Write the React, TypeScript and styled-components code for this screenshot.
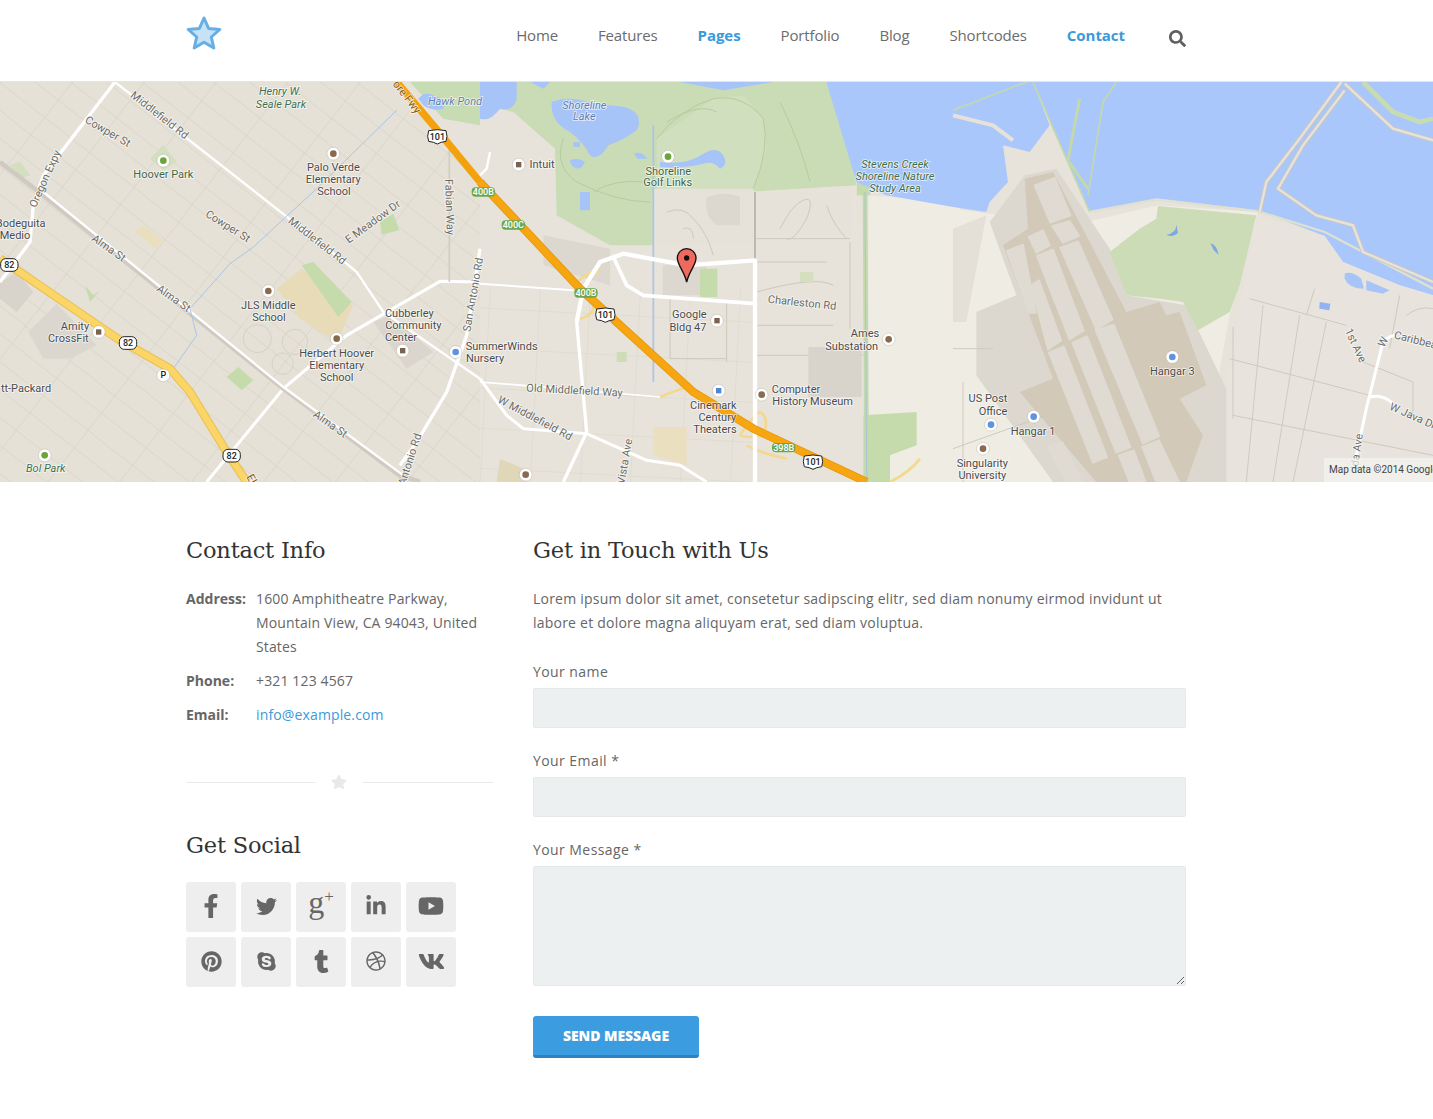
import React from 'react';
import styled, { createGlobalStyle } from 'styled-components';
import {
  FaDribbble,
  FaFacebookF,
  FaLinkedinIn,
  FaPinterest,
  FaSearch,
  FaSkype,
  FaStar,
  FaTumblr,
  FaTwitter,
  FaVk,
  FaYoutube,
} from 'react-icons/fa';

type LabelKind = 'place' | 'road' | 'park' | 'green' | 'water' | 'fwy';
type Label = { t: string; x: number; y: number; r?: number; k?: LabelKind };

const GlobalStyle = createGlobalStyle`
  html, body { margin: 0; padding: 0; background: #fff; }
  body {
    font-family: 'Open Sans', 'Liberation Sans', sans-serif;
    font-size: 14px;
    line-height: 24px;
    color: #666;
  }
`;

const Page = styled.div`
  width: 1433px;
  height: 1119px;
  overflow: hidden;
`;

const Header = styled.header`
  height: 81px;
  width: 1000px;
  margin-left: 186px;
  display: flex;
  justify-content: space-between;
  align-items: flex-start;
`;

const Logo = styled.svg`
  width: 36px;
  height: 35px;
  margin-top: 15px;
`;

const Nav = styled.nav`
  display: flex;
  align-items: center;
  gap: 40px;
  height: 71px;
`;

const NavLink = styled.a<{ $active?: boolean }>`
  font-size: 15px;
  letter-spacing: ${(p) => (p.$active ? '-0.05px' : '-0.15px')};
  font-weight: ${(p) => (p.$active ? 700 : 400)};
  color: ${(p) => (p.$active ? '#3b9ad9' : '#6c6c6c')};
  margin-top: -2px;
`;

const SearchButton = styled.span`
  display: flex;
  margin-left: 4px;
  margin-top: 6px;
  color: #5f5f5f;
  font-size: 17px;
`;

const MapFrame = styled.div`
  position: relative;
  height: 400px;
  border-top: 1px solid #e5e5e5;
  overflow: hidden;
  background: #e6e2da;
`;

const MapSvg = styled.svg`
  display: block;
  width: 1433px;
  height: 400px;
`;

const MapCredit = styled.div`
  position: absolute;
  right: 0;
  bottom: 0;
  width: 109px;
  height: 24px;
  padding-left: 5px;
  box-sizing: border-box;
  background: rgba(245, 243, 238, 0.7);
  font-family: Roboto, 'Liberation Sans', sans-serif;
  font-size: 10px;
  line-height: 24px;
  color: #444;
  white-space: nowrap;
  overflow: hidden;
`;

const labelColors: Record<LabelKind, string> = {
  place: '#4b4b4b',
  road: '#6b6b66',
  park: '#3f6f4c',
  green: '#3f6648',
  water: '#5d7fae',
  fwy: '#8a5a10',
};

const MapText = styled.text<{ $kind: LabelKind }>`
  font-family: Roboto, 'Liberation Sans', sans-serif;
  font-size: 33px;
  font-style: ${(p) => (p.$kind === 'water' || p.$kind === 'park' ? 'italic' : 'normal')};
  fill: ${(p) => labelColors[p.$kind]};
  stroke: rgba(255, 255, 255, 0.7);
  stroke-width: 5px;
  paint-order: stroke;
  text-anchor: middle;
`;

const ShieldText = styled.text<{ $light?: boolean }>`
  font-family: Roboto, 'Liberation Sans', sans-serif;
  font-size: 27px;
  font-weight: 500;
  fill: ${(p) => (p.$light ? '#fff' : '#222')};
  text-anchor: middle;
`;

const Content = styled.main`
  width: 1000px;
  margin-left: 186px;
  padding-top: 50px;
  display: grid;
  grid-template-columns: 307px 653px;
  column-gap: 40px;
`;

const Sidebar = styled.aside``;

const Heading = styled.h3`
  margin: 0 0 19px;
  font-family: 'DejaVu Serif', 'Liberation Serif', serif;
  font-weight: 400;
  font-size: 22.5px;
  line-height: 36px;
  letter-spacing: -0.2px;
  color: #333;
`;

const InfoList = styled.dl`
  margin: 0;
  display: grid;
  grid-template-columns: 70px 1fr;
  row-gap: 10px;
`;

const InfoKey = styled.dt`
  font-weight: 700;
  color: #666;
`;

const InfoValue = styled.dd`
  margin: 0;
  letter-spacing: 0.14px;
`;

const MailLink = styled.a`
  color: #3b9ad9;
`;

const Divider = styled.div`
  display: flex;
  align-items: center;
  gap: 16px;
  margin: 47px 0 37px;
  color: #e9e9e9;
  font-size: 16px;

  svg {
    margin-left: -1px;
  }

  &::before,
  &::after {
    content: '';
    flex: 1;
    height: 1px;
    background: #eaeaea;
  }
`;

const SocialGrid = styled.div`
  display: grid;
  grid-template-columns: repeat(5, 50px);
  gap: 5px;
`;

const SocialTile = styled.a<{ $size?: number }>`
  height: 50px;
  padding-bottom: 2px;
  box-sizing: border-box;
  display: flex;
  align-items: center;
  justify-content: center;
  background: #eee;
  border-radius: 3px;
  color: #666;
  font-size: ${(p) => p.$size ?? 21}px;
`;

const GooglePlus = styled.span`
  font-family: 'Liberation Serif', serif;
  font-size: 32px;
  line-height: 1;
  margin-top: -8px;

  sup {
    font-size: 17px;
    line-height: 0;
    vertical-align: 11px;
  }
`;

const FormColumn = styled.section``;

const Intro = styled.p`
  margin: 0 0 25px;
  letter-spacing: 0.22px;
`;

const Form = styled.form`
  display: flex;
  flex-direction: column;
  align-items: flex-start;
`;

const FieldLabel = styled.label`
  display: block;
  width: 100%;
  margin-bottom: 21px;
  letter-spacing: 0.43px;
`;

const fieldStyles = `
  display: block;
  width: 100%;
  box-sizing: border-box;
  margin-top: 4px;
  background: #ecf0f1;
  border: 1px solid #e5e9ea;
  border-radius: 2px;
  outline: none;
`;

const TextInput = styled.input`
  ${fieldStyles}
  height: 40px;
`;

const MessageInput = styled.textarea`
  ${fieldStyles}
  height: 120px;
  resize: vertical;
`;

const SendButton = styled.button`
  width: 166px;
  height: 42px;
  margin-top: 9px;
  padding: 0;
  border: 0;
  border-bottom: 3px solid #2f82c0;
  border-radius: 3px;
  background: #3b9ce0;
  font-family: 'Open Sans', sans-serif;
  font-size: 14px;
  font-weight: 800;
  letter-spacing: -0.08px;
  color: #fff;
  text-transform: uppercase;
`;

const leftLabels: Label[] = [
  { t: 'Henry W.', x: 840, y: 40, k: 'park' },
  { t: 'Seale Park', x: 843, y: 78, k: 'park' },
  { t: 'Middlefield Rd', x: 472, y: 108, r: 38, k: 'road' },
  { t: 'Middlefield Rd', x: 945, y: 485, r: 38, k: 'road' },
  { t: 'Cowper St', x: 318, y: 158, r: 30, k: 'road' },
  { t: 'Cowper St', x: 678, y: 442, r: 32, k: 'road' },
  { t: 'Hoover Park', x: 490, y: 289, k: 'green' },
  { t: 'Palo Verde', x: 1000, y: 268 },
  { t: 'Elementary', x: 1000, y: 304 },
  { t: 'School', x: 1002, y: 340 },
  { t: 'E Meadow Dr', x: 1125, y: 428, r: -36, k: 'road' },
  { t: 'Fabian Way', x: 1338, y: 375, r: 88, k: 'road' },
  { t: 'San Antonio Rd', x: 1430, y: 640, r: -80, k: 'road' },
  { t: 'Oregon Expy', x: 145, y: 295, r: -66, k: 'road' },
  { t: 'Bodeguita', x: 62, y: 436 },
  { t: 'Medio', x: 45, y: 472 },
  { t: 'Alma St', x: 320, y: 507, r: 35, k: 'road' },
  { t: 'Alma St', x: 515, y: 658, r: 35, k: 'road' },
  { t: 'Alma St', x: 985, y: 1035, r: 35, k: 'road' },
  { t: 'JLS Middle', x: 805, y: 680 },
  { t: 'School', x: 807, y: 716 },
  { t: 'Cubberley', x: 1228, y: 704 },
  { t: 'Community', x: 1240, y: 740 },
  { t: 'Center', x: 1203, y: 776 },
  { t: 'SummerWinds', x: 1505, y: 803 },
  { t: 'Nursery', x: 1455, y: 839 },
  { t: 'Amity', x: 225, y: 743 },
  { t: 'CrossFit', x: 205, y: 779 },
  { t: 'Herbert Hoover', x: 1010, y: 824 },
  { t: 'Elementary', x: 1010, y: 860 },
  { t: 'School', x: 1010, y: 896 },
  { t: 'tt-Packard', x: 78, y: 929 },
  { t: 'Bol Park', x: 137, y: 1171, k: 'park' },
  { t: 'Antonio Rd', x: 1240, y: 1135, r: -72, k: 'road' },
  { t: 'ore Fwy', x: 1212, y: 52, r: 52, k: 'fwy' },
  { t: 'Hawk Pond', x: 1365, y: 70, k: 'water' },
  { t: 'El', x: 745, y: 1196, r: 62, k: 'fwy' },
];

const midLabels: Label[] = [
  { t: 'Shoreline', x: 313, y: 82, k: 'water' },
  { t: 'Lake', x: 313, y: 115, k: 'water' },
  { t: 'Intuit', x: 186, y: 259 },
  { t: 'Shoreline', x: 565, y: 278, k: 'green' },
  { t: 'Golf Links', x: 563, y: 313, k: 'green' },
  { t: 'Stevens Creek', x: 1245, y: 257, k: 'park' },
  { t: 'Shoreline Nature', x: 1245, y: 293, k: 'park' },
  { t: 'Study Area', x: 1245, y: 329, k: 'park' },
  { t: 'Charleston Rd', x: 965, y: 673, r: 6, k: 'road' },
  { t: 'Google', x: 628, y: 707 },
  { t: 'Bldg 47', x: 624, y: 746 },
  { t: 'Ames', x: 1155, y: 764 },
  { t: 'Substation', x: 1115, y: 803 },
  { t: 'Computer', x: 948, y: 932 },
  { t: 'History Museum', x: 998, y: 968 },
  { t: 'Old Middlefield Way', x: 283, y: 936, r: 3, k: 'road' },
  { t: 'W Middlefield Rd', x: 160, y: 1018, r: 28, k: 'road' },
  { t: 'Vista Ave', x: 445, y: 1140, r: -80, k: 'road' },
  { t: 'Cinemark', x: 700, y: 980 },
  { t: 'Century', x: 712, y: 1016 },
  { t: 'Theaters', x: 705, y: 1052 },
];

const rightLabels: Label[] = [
  { t: 'Hangar 3', x: 658, y: 878 },
  { t: 'US Post', x: 105, y: 959 },
  { t: 'Office', x: 120, y: 998 },
  { t: 'Hangar 1', x: 240, y: 1059 },
  { t: 'Singularity', x: 88, y: 1155 },
  { t: 'University', x: 88, y: 1190 },
  { t: '1st Ave', x: 1198, y: 795, r: 65, k: 'road' },
  { t: 'W', x: 1300, y: 785, r: -62, k: 'road' },
  { t: 'Caribbea', x: 1385, y: 785, r: 14, k: 'road' },
  { t: 'W Java Dr', x: 1375, y: 1012, r: 24, k: 'road' },
  { t: 'Ida Ave', x: 1222, y: 1110, r: -82, k: 'road' },
];

const runways = [
  '245,310 305,288 352,400 292,422',
  '298,432 350,418 378,462 330,482',
  '228,465 270,445 290,490 250,512',
  '322,497 375,478 478,712 430,742',
  '252,522 300,503 392,745 350,772',
  '162,507 210,488 248,692 228,692',
  '235,610 258,595 324,775 285,802',
  '428,745 482,728 618,1062 570,1084',
  '358,782 402,763 532,1095 490,1112',
  '288,812 332,793 462,1125 420,1142',
  '568,1095 618,1075 678,1200 610,1200',
  '283,1095 327,1080 388,1200 340,1200',
  '498,1120 542,1105 578,1200 530,1200',
];

const Labels: React.FC<{ items: Label[]; dx: number }> = ({ items, dx }) => (
  <g transform={`translate(${dx} 0)`}>
    {items.map((l, i) => (
      <MapText
        key={`${l.t}-${i}`}
        $kind={l.k ?? 'place'}
        x={l.x}
        y={l.y}
        transform={l.r ? `rotate(${l.r} ${l.x} ${l.y})` : undefined}
      >
        {l.t}
      </MapText>
    ))}
  </g>
);

const Shield: React.FC<{ x: number; y: number; t: string }> = ({ x, y, t }) => (
  <g transform={`translate(${x} ${y})`}>
    <path
      d="M-26 -18 Q0 -24 26 -18 Q32 0 26 14 Q10 16 0 22 Q-10 16 -26 14 Q-32 0 -26 -18Z"
      fill="#fff"
      stroke="#222"
      strokeWidth="3"
    />
    <ShieldText y={9}>{t}</ShieldText>
  </g>
);

const RoundShield: React.FC<{ x: number; y: number; t: string }> = ({ x, y, t }) => (
  <g transform={`translate(${x} ${y})`}>
    <rect x={-26} y={-19} width={52} height={38} rx={15} fill="#fff" stroke="#222" strokeWidth="3" />
    <ShieldText y={9}>{t}</ShieldText>
  </g>
);

const ExitTag: React.FC<{ x: number; y: number; t: string }> = ({ x, y, t }) => (
  <g transform={`translate(${x} ${y})`}>
    <rect x={-35} y={-14} width={70} height={28} rx={12} fill="#6aa84f" />
    <ShieldText $light y={9}>
      {t}
    </ShieldText>
  </g>
);

const Poi: React.FC<{ x: number; y: number; c: string; square?: boolean; t?: string }> = ({ x, y, c, square, t }) => (
  <g transform={`translate(${x} ${y})`}>
    <circle r={19} fill="#fff" stroke="rgba(120,115,100,0.35)" strokeWidth="2" />
    {t ? (
      <ShieldText y={9} fill={c}>
        {t}
      </ShieldText>
    ) : square ? (
      <rect x={-8} y={-8} width={16} height={16} fill={c} />
    ) : (
      <circle r={10} fill={c} />
    )}
  </g>
);

const MapDrawing: React.FC = () => (
  <MapSvg viewBox="0 0 4299 1200">
    <defs>
      <pattern id="streets" patternUnits="userSpaceOnUse" width="170" height="66" patternTransform="rotate(38)">
        <path d="M0 0H170M0 0V66" stroke="#d5d0c4" strokeWidth="3" fill="none" />
      </pattern>
      <pattern id="blocks" patternUnits="userSpaceOnUse" width="150" height="120" patternTransform="rotate(3)">
        <path d="M0 0H150M0 0V120" stroke="#d9d5ca" strokeWidth="3" fill="none" />
      </pattern>
      <radialGradient id="bay" gradientUnits="userSpaceOnUse" cx="3550" cy="100" r="1100">
        <stop offset="0.55" stopColor="#b0ccfd" />
        <stop offset="1" stopColor="#a9c7fb" />
      </radialGradient>
    </defs>

    <rect width="4299" height="1200" fill="#e7e3da" />
    <polygon points="0,0 1190,0 1440,300 1440,1200 0,1200" fill="#e5e1d7" />
    <polygon points="0,0 1190,0 1440,300 1440,1200 0,1200" fill="url(#streets)" />
    <rect x="1440" y="620" width="830" height="580" fill="url(#blocks)" />

    {/* left panel */}
    <g>
      <polygon points="405,450 430,428 490,475 465,500" fill="#e9dfbf" />
      <polygon points="830,620 905,560 1000,640 1060,670 1010,780 900,710" fill="#e8dcb8" />
      <polygon points="905,550 940,540 1055,660 1015,705" fill="#c6dbac" />
      <polygon points="1140,420 1180,395 1198,445 1145,458" fill="#c6dbac" />
      <polygon points="680,885 715,855 760,895 725,925" fill="#c6dbac" />
      <polygon points="255,610 280,640 300,625 270,660" fill="#c6dbac" />
      <polygon points="450,230 490,188 530,240 490,265" fill="#d3dfbe" />
      <polygon points="30,250 60,238 90,280 60,290" fill="#d3dfbe" />
      <polygon points="85,750 170,665 290,790 210,830 130,830" fill="#dcd7ce" />
      <polygon points="1120,720 1170,700 1300,810 1220,860" fill="#dad6cd" />
      <polygon points="0,600 50,570 100,630 50,690 0,650" fill="#d8d4cb" />
      <circle cx="772" cy="770" r="42" fill="none" stroke="#d6d1c6" strokeWidth="3" />
      <circle cx="885" cy="780" r="38" fill="none" stroke="#d6d1c6" strokeWidth="3" />
      <circle cx="848" cy="845" r="32" fill="none" stroke="#d6d1c6" strokeWidth="3" />

      <polyline points="345,0 130,280 100,370 90,480 0,600" fill="none" stroke="#fff" strokeWidth="10" />
      <polyline points="345,0 1040,545 1070,570 1150,690 1440,890" fill="none" stroke="#fff" strokeWidth="7" />
      <polyline points="1440,500 1400,760 1340,930 1250,1080 1200,1150" fill="none" stroke="#fff" strokeWidth="10" />
      <polyline points="620,1200 850,920 1040,760 1320,598 1440,600" fill="none" stroke="#fff" strokeWidth="9" />
      <polyline points="0,240 130,340 850,920 1200,1180 1260,1200" fill="none" stroke="#cfcbc2" strokeWidth="14" />
      <polyline points="130,330 850,915 1210,1180" fill="none" stroke="#fff" strokeWidth="7" />
      <polyline points="1348,200 1348,600" fill="none" stroke="#d2cdc1" strokeWidth="5" />
      <polyline
        points="1190,85 950,320 760,495 690,545 570,680 590,760 520,860"
        fill="none"
        stroke="#a9c4ec"
        strokeWidth="3"
      />

      <polyline
        points="0,530 30,550 360,775 510,860 570,930 680,1110 740,1200"
        fill="none"
        stroke="#e9bf55"
        strokeWidth="26"
      />
      <polyline
        points="0,530 30,550 360,775 510,860 570,930 680,1110 740,1200"
        fill="none"
        stroke="#fbd565"
        strokeWidth="20"
      />
      <path d="M1230 0h210v130l-110 -20z" fill="#c8dcb3" />
      <path d="M1255 50q20 -25 45 -10q40 10 30 40q-30 10 -60 -10z" fill="#a6c4f7" />
      <polyline points="1190,0 1300,130 1440,300" fill="none" stroke="#f4a10e" strokeWidth="22" />

      <Poi x={490} y={236} c="#6aa53a" />
      <Poi x={1000} y={215} c="#8a6a4f" />
      <Poi x={805} y={627} c="#8a6a4f" />
      <Poi x={1010} y={770} c="#8a6a4f" />
      <Poi x={1208} y={806} c="#7a6250" square />
      <Poi x={296} y={750} c="#7a6250" square />
      <Poi x={134} y={1120} c="#6aa53a" />
      <Poi x={1367} y={810} c="#5f93dd" />
      <Poi x={490} y={880} c="#8a6a4f" t="P" />
      <RoundShield x={28} y={549} t="82" />
      <RoundShield x={384} y={783} t="82" />
      <RoundShield x={695} y={1121} t="82" />
      <Shield x={1312} y={164} t="101" />
    </g>

    {/* middle panel */}
    <g transform="translate(1440 0)">
      <polygon
        points="60,0 1060,0 1130,310 830,328 520,320 520,490 390,490 230,400 225,200 100,90 60,80"
        fill="#c9dcb5"
      />
      <polygon points="530,170 700,50 790,40 850,110 860,200 820,320 530,320" fill="#d2e0c0" opacity="0.8" />
      <path
        d="M530 170Q600 80 700 50Q790 35 850 110Q870 200 820 320M250 170q-30 80 40 130q120 60 220 60M900 60q60 120 90 240M340 330q60 -40 160 -30M560 120q100 -60 150 -30"
        fill="none"
        stroke="#b6cc9f"
        strokeWidth="3"
      />
      <path d="M0 0h110v50q-10 40 -50 30q-30 40 -60 30z" fill="#a6c4f7" />
      <path d="M150 0h60l-20 20zM600 0h280l-150 25z" fill="#a6c4f7" />
      <path
        d="M215 60q50 -20 110 0q60 10 110 15q60 20 35 70q-40 30 -85 45q-30 50 -55 30q-20 -40 -60 -70q-60 -30 -55 -90z"
        fill="#a6c4f7"
      />
      <path d="M270 235q25 -10 45 5q-10 20 -20 20q-25 -5 -25 -25zM300 330h30v55h-30z" fill="#a6c4f7" />
      <path d="M462 215q20 -10 40 15h-30zM280 180h20v15h-20z" fill="#a6c4f7" />
      <path d="M540 240q80 10 130 -25q40 -25 60 5q15 30 -10 40q-20 -25 -50 -15q-60 15 -130 10z" fill="#a6c4f7" />
      <polyline points="520,130 520,900" fill="none" stroke="#a9c4ec" strokeWidth="5" />
      <path d="M530 320h290v160q-140 10 -290 10zM830 330h285v130h-285z" fill="#e6e2da" />
      <path
        d="M680 345q60 -20 100 0v85h-70q-40 -30 -30 -85zM190 460l200 40v110l-200 -60zM548 550h130v90h-130z"
        fill="#dcd8cf"
      />
      <path d="M660 560h52v85h-52z" fill="#c6dbac" />
      <path
        d="M560 390q50 -20 80 20q40 40 60 110M610 440q30 -10 30 30M900 440q30 -60 60 -80q50 -30 20 50q-40 70 -60 60M1040 370q20 60 60 100M830 470H1110M830 540H1040"
        fill="none"
        stroke="#cdc8bc"
        strokeWidth="3"
      />
      <path
        d="M570 650v180h170M740 660v180M830 820H1150M1110 480V740M1060 610q-50 -30 -230 20M830 730h230"
        fill="none"
        stroke="#cdc8bc"
        strokeWidth="3"
      />
      <rect x="985" y="795" width="160" height="150" fill="#d8d4cb" />
      <polygon points="1165,340 1440,360 1440,1200 1165,1200" fill="#efece4" />
      <polygon points="1150,1000 1310,990 1310,1090 1230,1120 1230,1200 1150,1200" fill="#c6dbac" />
      <polygon points="1140,0 1200,0 1170,340 1130,340" fill="#c6dbac" />
      <rect x="410" y="810" width="30" height="30" fill="#cfdcb8" />
      <rect x="960" y="570" width="40" height="30" fill="#d3dfbe" />
      <polygon points="520,1035 620,1035 620,1150 520,1120" fill="#eadfbe" />
      <polygon points="60,1130 130,1160 140,1200 50,1200" fill="#dfd7b8" />
      <polyline points="825,330 825,535" fill="none" stroke="#bdb9ae" strokeWidth="6" />
      <polyline points="1155,330 1160,1200" fill="none" stroke="#c3d9ab" strokeWidth="14" />
      <polyline points="1155,330 1160,1200" fill="none" stroke="#9fbdeb" strokeWidth="2" />
      <path
        d="M290 600q50 -40 70 -30M300 710q50 -10 40 -60M540 945q70 -30 100 -30M780 1060q40 -60 60 -70q30 20 10 70q-50 10 -70 0M800 1090q60 30 120 40M1230 1200q60 -30 90 -70"
        fill="none"
        stroke="#f2d98c"
        strokeWidth="8"
      />
      <g fill="none" stroke="#fff" strokeLinejoin="round">
        <polyline points="290,720 310,620 360,540 430,515 620,550 825,535 825,1200" strokeWidth="13" />
        <polyline points="400,525 440,610 490,640 825,665" strokeWidth="11" />
        <polyline points="0,605 280,625" strokeWidth="6" />
        <polyline points="290,720 320,1050 250,1200" strokeWidth="10" />
        <polyline points="0,900 130,910 540,945" strokeWidth="5" />
        <polyline points="0,890 80,1000 130,1040 320,1055 500,1135 600,1150 680,1200" strokeWidth="9" />
        <polyline points="30,210 20,260 0,280" strokeWidth="7" />
      </g>
      <polyline points="0,300 300,620 640,930 820,1040 1160,1200" fill="none" stroke="#e2980c" strokeWidth="25" />
      <polyline points="0,300 300,620 640,930 820,1040 1160,1200" fill="none" stroke="#f7a612" strokeWidth="20" />

      <path
        d="M620 600C612 565 592 550 592 528a28 28 0 1 1 56 0C648 550 628 565 620 600Z"
        fill="#f0695e"
        stroke="#111"
        strokeWidth="4"
      />
      <circle cx="620" cy="528" r="8" fill="#111" />

      <ExitTag x={10} y={330} t="400B" />
      <ExitTag x={100} y={429} t="400C" />
      <ExitTag x={318} y={633} t="400B" />
      <ExitTag x={911} y={1097} t="398B" />
      <Shield x={376} y={699} t="101" />
      <Shield x={999} y={1140} t="101" />
      <Poi x={116} y={248} c="#7a6250" square />
      <Poi x={564} y={224} c="#6aa53a" />
      <Poi x={711} y={716} c="#7a6250" square />
      <Poi x={1244} y={204} c="#6aa53a" />
      <Poi x={1226} y={772} c="#8a6a4f" />
      <Poi x={845} y={938} c="#8a6a4f" />
      <Poi x={716} y={926} c="#4f84d8" square />
      <Poi x={137} y={1178} c="#8a6a4f" />
    </g>

    {/* right panel */}
    <g transform="translate(2859 0)">
      <path
        d="M-127 0H240L290 130L230 210L150 190L165 300L110 360L100 390L0 375L-200 340L-290 300L-380 0Z"
        fill="url(#bay)"
      />
      <path d="M240 0H1440V640L1340 610L1170 540L1115 462L915 385L610 350L410 390L340 230Z" fill="url(#bay)" />
      <polygon points="1440,640 1440,1200 820,1200 820,920 910,400 1115,462 1170,540 1340,610" fill="#e8e4dd" />
      <polygon points="0,380 110,395 400,420 615,370 915,390 830,700 800,860 820,1200 0,1200" fill="#efece4" />
      <path d="M1175 575q20 -10 50 15l8 30q-45 0 -58 -30zM1240 595l70 30 -20 10 -50 -10z" fill="#a6c4f7" />
      <path d="M1100 660l32 5 -3 20 -30 -5z" fill="#8fb4ef" />
      <polygon points="0,440 100,400 40,720 0,720" fill="#e4e0d8" />

      <polygon
        points="110,420 215,280 310,260 470,500 520,640 700,670 820,920 820,1200 300,1200 70,880 70,690 190,640"
        fill="#dcd8d0"
      />
      <polygon
        points="215,290 300,270 520,690 620,660 640,700 680,690 760,910 680,950 750,1060 700,1200 430,1200 200,930 300,890 150,490 225,440"
        fill="#d2c9b9"
      />
      {runways.map((p) => (
        <polygon key={p} points={p} fill="#dfdbd3" stroke="#dfdbd3" strokeWidth="6" strokeLinejoin="round" />
      ))}
      <polygon
        points="615,372 910,400 860,610 830,690 735,745 690,660 620,650 520,640 470,510 560,440 610,410"
        fill="#ccdcb7"
      />
      <path d="M640 458q30 -5 30 -30l5 25q-15 15 -35 5zM772 484q20 5 25 35l-15 -15z" fill="#7fa6e6" />

      <polyline points="0,100 120,130 180,175" fill="none" stroke="#e6e2da" strokeWidth="12" />
      <polyline points="0,85 220,0" fill="none" stroke="#c3d9ab" strokeWidth="5" />
      <polyline points="240,0 340,230 410,390" fill="none" stroke="#c3d9ab" strokeWidth="5" />
      <polyline points="380,50 345,235 405,320" fill="none" stroke="#c3d9ab" strokeWidth="9" />
      <polyline points="490,0 450,60 405,340" fill="none" stroke="#c3d9ab" strokeWidth="5" />
      <polyline points="410,390 610,352 915,388 1115,450 1440,620" fill="none" stroke="#dfe0cf" strokeWidth="7" />
      <g fill="none" stroke="#cac7c0" strokeWidth="13">
        <polyline points="1165,0 1040,170 940,300 920,390" />
        <polyline points="1175,25 1050,190 975,320 1090,400 1200,430 1230,510 1440,600" />
        <polyline points="1175,5 1320,140 1440,175" />
      </g>
      <g fill="none" stroke="#e6e3dc" strokeWidth="7">
        <polyline points="1165,0 1040,170 940,300 920,390" />
        <polyline points="1175,25 1050,190 975,320 1090,400 1200,430 1230,510 1440,600" />
        <polyline points="1175,5 1320,140 1440,175" />
      </g>
      <polyline points="1230,0 1320,90 1400,120 1440,110" fill="none" stroke="#c8dcb3" strokeWidth="14" />
      <g fill="none" stroke="#cfcabf" strokeWidth="3">
        <path d="M830 830L1250 940M840 735V1010M890 650L1180 730M930 670L880 1200M1040 700L960 1200M1120 720L1020 1200M840 1000L1440 1120M1085 620L1060 700" />
        <path d="M1340 640L1310 800M1230 840L1380 900V1000M1360 700q40 -30 80 -20M0 800H120M0 1100L280 1000M30 900V1200" />
      </g>
      <g fill="none" stroke="#fff" strokeWidth="9">
        <path d="M1290 780L1240 980L1210 1120M1250 945q40 -10 70 20M1290 780q20 -20 40 -20" />
      </g>
      <Poi x={658} y={825} c="#5f93dd" />
      <Poi x={242} y={1004} c="#5f93dd" />
      <Poi x={114} y={1028} c="#5f93dd" />
      <Poi x={90} y={1100} c="#8a6a4f" />
    </g>

    <Labels items={leftLabels} dx={0} />
    <Labels items={midLabels} dx={1440} />
    <Labels items={rightLabels} dx={2859} />
  </MapSvg>
);

const App: React.FC = () => (
  <Page>
    <GlobalStyle />
    <Header>
      <Logo viewBox="0 0 36 35">
        <path
          d="M18 3l4.6 10.4 11.2 1.1-8.5 7.5 2.5 11L18 27.2 8.2 33l2.5-11-8.5-7.5 11.2-1.1z"
          fill="#c5e2f6"
          stroke="#66aee4"
          strokeWidth="3"
          strokeLinejoin="round"
        />
      </Logo>
      <Nav>
        <NavLink>Home</NavLink>
        <NavLink>Features</NavLink>
        <NavLink $active>Pages</NavLink>
        <NavLink>Portfolio</NavLink>
        <NavLink>Blog</NavLink>
        <NavLink>Shortcodes</NavLink>
        <NavLink $active>Contact</NavLink>
        <SearchButton>
          <FaSearch />
        </SearchButton>
      </Nav>
    </Header>

    <MapFrame>
      <MapDrawing />
      <MapCredit>Map data ©2014 Google</MapCredit>
    </MapFrame>

    <Content>
      <Sidebar>
        <Heading>Contact Info</Heading>
        <InfoList>
          <InfoKey>Address:</InfoKey>
          <InfoValue>1600 Amphitheatre Parkway, Mountain View, CA 94043, United States</InfoValue>
          <InfoKey>Phone:</InfoKey>
          <InfoValue>+321 123 4567</InfoValue>
          <InfoKey>Email:</InfoKey>
          <InfoValue>
            <MailLink>info@example.com</MailLink>
          </InfoValue>
        </InfoList>
        <Divider>
          <FaStar />
        </Divider>
        <Heading>Get Social</Heading>
        <SocialGrid>
          <SocialTile $size={24}><FaFacebookF /></SocialTile>
          <SocialTile><FaTwitter /></SocialTile>
          <SocialTile><GooglePlus>g<sup>+</sup></GooglePlus></SocialTile>
          <SocialTile $size={22}><FaLinkedinIn /></SocialTile>
          <SocialTile $size={26}><FaYoutube /></SocialTile>
          <SocialTile><FaPinterest /></SocialTile>
          <SocialTile><FaSkype /></SocialTile>
          <SocialTile $size={23}><FaTumblr /></SocialTile>
          <SocialTile $size={20}><FaDribbble /></SocialTile>
          <SocialTile $size={27}><FaVk /></SocialTile>
        </SocialGrid>
      </Sidebar>

      <FormColumn>
        <Heading>Get in Touch with Us</Heading>
        <Intro>
          Lorem ipsum dolor sit amet, consetetur sadipscing elitr, sed diam nonumy eirmod invidunt ut labore et dolore
          magna aliquyam erat, sed diam voluptua.
        </Intro>
        <Form>
          <FieldLabel>
            Your name
            <TextInput />
          </FieldLabel>
          <FieldLabel>
            Your Email *
            <TextInput />
          </FieldLabel>
          <FieldLabel>
            Your Message *
            <MessageInput />
          </FieldLabel>
          <SendButton type="button">Send Message</SendButton>
        </Form>
      </FormColumn>
    </Content>
  </Page>
);

export default App;
